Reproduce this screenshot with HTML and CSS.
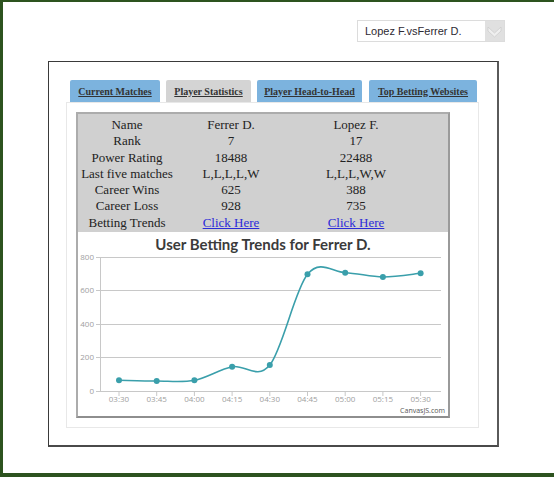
FILE: index.html
```html
<!DOCTYPE html>
<html>
<head>
<meta charset="utf-8">
<link rel="stylesheet" href="styles.css">
</head>
<body>
<div class="frame">
  <div class="topbar">
    <div class="select">
      <span class="select-text">Lopez F.vsFerrer D.</span>
      <span class="select-arrow">
        <svg width="19" height="20" viewBox="0 0 19 20">
          <polygon points="3,6 9.5,12 16,6 16,10 9.5,16 3,10" fill="#efefef" stroke="#cdcdcd" stroke-width="0.8"/>
        </svg>
      </span>
    </div>
  </div>
  <div class="box">
    <div class="tabs">
      <a class="tab tab-blue tab-1">Current Matches</a>
      <a class="tab tab-gray tab-2">Player Statistics</a>
      <a class="tab tab-blue tab-3">Player Head-to-Head</a>
      <a class="tab tab-blue tab-4">Top Betting Websites</a>
    </div>
    <div class="panel">
      <div class="stats">
        <div class="grid">
          <div>Name</div><div>Ferrer D.</div><div>Lopez F.</div>
          <div>Rank</div><div>7</div><div>17</div>
          <div>Power Rating</div><div>18488</div><div>22488</div>
          <div>Last five matches</div><div>L,L,L,L,W</div><div>L,L,L,W,W</div>
          <div>Career Wins</div><div>625</div><div>388</div>
          <div>Career Loss</div><div>928</div><div>735</div>
          <div>Betting Trends</div><div><a class="link">Click Here</a></div><div><a class="link">Click Here</a></div>
        </div>
        <svg class="chart" width="370" height="184" viewBox="0 0 370 184">
          <text class="title" x="185" y="18" text-anchor="middle">User Betting Trends for Ferrer D.</text>
          <g stroke="#c8c8c8" stroke-width="1">
            <line x1="22" y1="25.5" x2="363" y2="25.5"/>
            <line x1="22" y1="58.5" x2="363" y2="58.5"/>
            <line x1="22" y1="92.5" x2="363" y2="92.5"/>
            <line x1="22" y1="125.5" x2="363" y2="125.5"/>
            <line x1="22" y1="159.5" x2="363" y2="159.5"/>
            <line x1="22.5" y1="25" x2="22.5" y2="160"/>
            <line x1="18" y1="25.5" x2="22" y2="25.5"/>
            <line x1="18" y1="58.5" x2="22" y2="58.5"/>
            <line x1="18" y1="92.5" x2="22" y2="92.5"/>
            <line x1="18" y1="125.5" x2="22" y2="125.5"/>
            <line x1="18" y1="159.5" x2="22" y2="159.5"/>
            <line x1="41" y1="160" x2="41" y2="164"/>
            <line x1="78.7" y1="160" x2="78.7" y2="164"/>
            <line x1="116.4" y1="160" x2="116.4" y2="164"/>
            <line x1="154.1" y1="160" x2="154.1" y2="164"/>
            <line x1="191.8" y1="160" x2="191.8" y2="164"/>
            <line x1="229.5" y1="160" x2="229.5" y2="164"/>
            <line x1="267.2" y1="160" x2="267.2" y2="164"/>
            <line x1="304.9" y1="160" x2="304.9" y2="164"/>
            <line x1="342.6" y1="160" x2="342.6" y2="164"/>
          </g>
          <g class="ylab" text-anchor="end">
            <text x="16" y="28">800</text>
            <text x="16" y="61">600</text>
            <text x="16" y="95">400</text>
            <text x="16" y="128">200</text>
            <text x="16" y="162">0</text>
          </g>
          <g class="xlab" text-anchor="middle">
            <text x="41" y="170">03:30</text>
            <text x="78.7" y="170">03:45</text>
            <text x="116.4" y="170">04:00</text>
            <text x="154.1" y="170">04:15</text>
            <text x="191.8" y="170">04:30</text>
            <text x="229.5" y="170">04:45</text>
            <text x="267.2" y="170">05:00</text>
            <text x="304.9" y="170">05:15</text>
            <text x="342.6" y="170">05:30</text>
          </g>
          <path fill="none" stroke="#3a9fab" stroke-width="1.6" d="M41,148.3 C47.3,148.4 66.1,149 78.7,149 C91.3,149 103.8,150.7 116.4,148.3 C129,145.9 141.5,137.3 154.1,134.7 C166.7,132.2 179.2,148.4 191.8,133 C204.4,117.6 216.9,57.7 229.5,42.3 C242.1,26.9 254.6,40.25 267.2,40.7 C279.8,41.15 292.3,44.9 304.9,45 C317.5,45.1 336.3,41.9 342.6,41.3"/>
          <g fill="#3a9fab">
            <circle cx="41" cy="148.3" r="3"/>
            <circle cx="78.7" cy="149" r="3"/>
            <circle cx="116.4" cy="148.3" r="3"/>
            <circle cx="154.1" cy="134.7" r="3"/>
            <circle cx="191.8" cy="133" r="3"/>
            <circle cx="229.5" cy="42.3" r="3"/>
            <circle cx="267.2" cy="40.7" r="3"/>
            <circle cx="304.9" cy="45" r="3"/>
            <circle cx="342.6" cy="41.3" r="3"/>
          </g>
          <text class="credit" x="367" y="181" text-anchor="end">CanvasJS.com</text>
        </svg>
      </div>
    </div>
  </div>
</div>
</body>
</html>
```
FILE: styles.css
```css
html, body {
  margin: 0;
  padding: 0;
  background: #ffffff;
}

.frame {
  box-sizing: border-box;
  width: 554px;
  height: 477px;
  border-top: 2px solid #2d531f;
  border-left: 3px solid #2d531f;
  border-bottom: 4px solid #2d531f;
  background: #ffffff;
}

.topbar {
  display: flex;
  justify-content: flex-end;
  padding: 18px 49px 0 0;
}

.select {
  box-sizing: border-box;
  width: 148px;
  height: 22px;
  border: 1px solid #dcdcdc;
  display: flex;
  align-items: center;
  justify-content: space-between;
  padding-left: 7px;
  font: 11px "Liberation Sans", Arial, sans-serif;
  color: #2e2a33;
  background: #ffffff;
}

.select-arrow {
  display: block;
  width: 19px;
  height: 20px;
  background: #e0e0e0;
}

.select-arrow svg {
  display: block;
}

.box {
  box-sizing: border-box;
  width: 451px;
  height: 386px;
  margin: 19px 0 0 45px;
  border: 1px solid #3a3a3a;
  border-right: 2px solid #5a5a5a;
  border-bottom: 2px solid #4a4a4a;
  padding: 18px 0 0 17px;
}

.tabs {
  display: flex;
  margin-left: 4px;
  height: 22px;
}

.tab {
  box-sizing: border-box;
  height: 22px;
  display: flex;
  align-items: center;
  justify-content: center;
  font: bold 10px "Liberation Serif", "Times New Roman", serif;
  color: #333333;
  text-decoration: underline;
  border-radius: 2px 2px 0 0;
}

.tab-blue {
  background: #7cb3de;
}

.tab-gray {
  background: #d4d4d4;
}

.tab-1 { width: 90px; }
.tab-2 { width: 85px; margin-left: 6px; }
.tab-3 { width: 105px; margin-left: 6px; }
.tab-4 { width: 108px; margin-left: 7px; }

.panel {
  box-sizing: border-box;
  width: 413px;
  height: 326px;
  border: 1px solid #e8e8e8;
  padding: 9px 0 0 9px;
  background: #ffffff;
}

.stats {
  box-sizing: border-box;
  width: 374px;
  height: 306px;
  border: 2px solid #acacac;
  border-bottom-color: #8e8e8e;
  border-right-color: #9a9a9a;
}

.grid {
  box-sizing: border-box;
  height: 118px;
  padding-top: 3px;
  background: #d0d0d0;
  display: grid;
  grid-template-columns: 98px 110px 140px;
  grid-auto-rows: 16.3px;
  font: 13px "Liberation Serif", "Times New Roman", serif;
  line-height: 16.3px;
  color: #222222;
  text-align: center;
  white-space: nowrap;
}

.link {
  color: #2b2bd8;
  text-decoration: underline;
}

.chart {
  display: block;
  width: 370px;
  height: 184px;
  background: #ffffff;
}

.title {
  font: 700 15px Lato, "Open Sans", sans-serif;
  fill: #3b3b3b;
}

.ylab text, .xlab text {
  font: 8px "Open Sans", "Noto Sans", sans-serif;
  fill: #a0a0a0;
}

.credit {
  font: 7px "Open Sans", "Noto Sans", sans-serif;
  fill: #555555;
}
```
